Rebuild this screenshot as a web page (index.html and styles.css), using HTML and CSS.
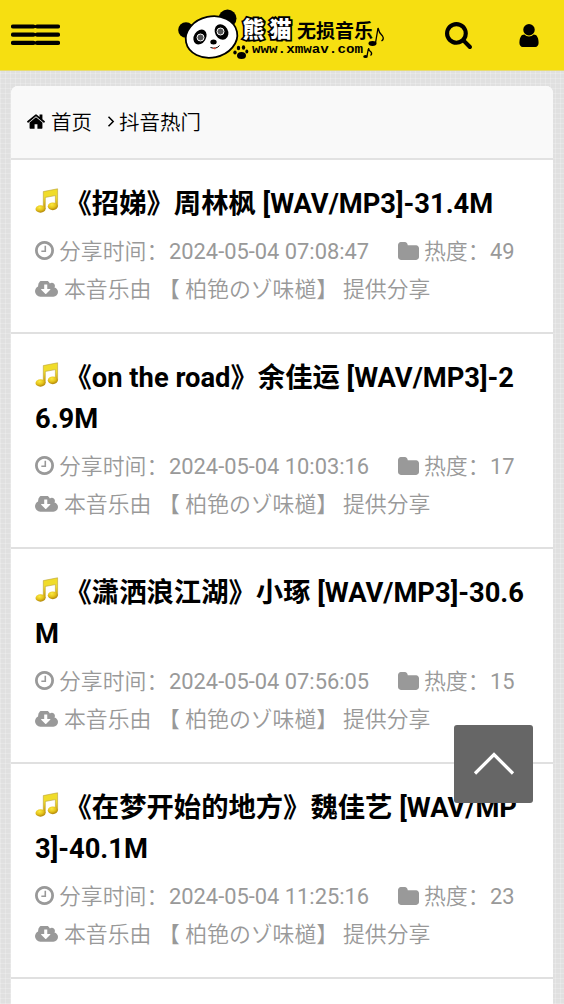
FILE: index.html
```html
<!DOCTYPE html>
<html lang="zh-CN">
<head>
<meta charset="utf-8">
<title>抖音热门</title>
<link rel="stylesheet" href="styles.css">
</head>
<body>
<svg class="defs" aria-hidden="true">
  <defs>
    <linearGradient id="gold" x1="0" y1="0" x2="0" y2="1"><stop offset="0" stop-color="#f0dc28"/><stop offset=".45" stop-color="#f0dc2c"/><stop offset="1" stop-color="#c99500"/></linearGradient>
    <radialGradient id="ball" cx=".4" cy=".3" r=".75"><stop offset="0" stop-color="#fbea40"/><stop offset=".5" stop-color="#e6c41c"/><stop offset="1" stop-color="#a87b05"/></radialGradient>
  </defs>
  <symbol id="i-note" viewBox="0 0 24 26">
    <path d="M8.300 3.600 22.600.8V18h-2.200V7.600L10.300 9.400V21H8.300Z" fill="url(#gold)" stroke="#b9a13a" stroke-width=".6"/>
    <ellipse cx="5.500" cy="21" rx="5" ry="3.700" fill="url(#ball)"/>
    <ellipse cx="17.800" cy="18.300" rx="5" ry="3.900" fill="url(#ball)"/>
  </symbol>
  <symbol id="i-search" viewBox="64 128 1664 1664"><path d="M1216 832q0-185-131.5-316.5t-316.5-131.5-316.5 131.5-131.5 316.5 131.5 316.5 316.5 131.5 316.5-131.5 131.5-316.5zm512 832q0 52-38 90t-90 38q-54 0-90-38l-343-342q-179 124-399 124-143 0-273.5-55.5t-225-150-150-225-55.5-273.5 55.5-273.5 150-225 225-150 273.5-55.5 273.5 55.5 225 150 150 225 55.5 273.5q0 220-124 399l343 343q37 37 37 90z"/></symbol>
  <symbol id="i-user" viewBox="256 128 1280 1536"><path d="M1536 1399q0 109-62.5 187t-150.5 78h-854q-88 0-150.5-78t-62.5-187q0-85 8.500-160.5t31.5-152 58.5-131 94-89 134.5-34.5q131 128 313 128t313-128q76 0 134.5 34.5t94 89 58.5 131 31.5 152 8.500 160.500zm-256-887q0 159-112.5 271.5t-271.5 112.5-271.5-112.5-112.5-271.5 112.5-271.5 271.5-112.5 271.5 112.5 112.5 271.500z"/></symbol>
  <symbol id="i-home" viewBox="88 253 1616 1283"><path d="M1472 992v480q0 26-19 45t-45 19h-384v-384h-256v384h-384q-26 0-45-19t-19-45v-480q0-1 .5-3t.5-3l575-474 575 474q1 2 1 6zm223-69l-62 74q-8 9-21 11h-3q-13 0-21-7l-692-577-692 577q-12 8-24 7-13-2-21-11l-62-74q-8-10-7-23.5t11-21.5l719-599q32-26 76-26t76 26l244 204v-195q0-14 9-23t23-9h192q14 0 23 9t9 23v408l219 182q10 8 11 21.5t-7 23.500z"/></symbol>
  <symbol id="i-clock" viewBox="128 128 1536 1536"><path d="M1024 544v448q0 14-9 23t-23 9h-320q-14 0-23-9t-9-23v-64q0-14 9-23t23-9h224v-352q0-14 9-23t23-9h64q14 0 23 9t9 23zm416 352q0-148-73-273t-198-198-273-73-273 73-198 198-73 273 73 273 198 198 273 73 273-73 198-198 73-273zm224 0q0 209-103 385.5t-279.5 279.5-385.5 103-385.5-103-279.5-279.5-103-385.5 103-385.5 279.5-279.5 385.5-103 385.5 103 279.5 279.5 103 385.500z"/></symbol>
  <symbol id="i-folder" viewBox="64 128 1664 1408"><path d="M1728 608v704q0 92-66 158t-158 66h-1216q-92 0-158-66t-66-158v-960q0-92 66-158t158-66h320q92 0 158 66t66 158v32h672q92 0 158 66t66 158z"/></symbol>
  <symbol id="i-cloud" viewBox="0 256 1920 1280"><path d="M1280 928q0-14-9-23t-23-9h-224v-352q0-13-9.500-22.500t-22.500-9.500h-192q-13 0-22.500 9.500t-9.500 22.500v352h-224q-13 0-22.500 9.500t-9.500 22.500q0 14 9 23l352 352q9 9 23 9t23-9l351-351q10-12 10-24zm640 224q0 159-112.5 271.5t-271.5 112.500h-1088q-185 0-316.5-131.5t-131.5-316.500q0-130 70-240t188-165q-2-30-2-43 0-212 150-362t362-150q156 0 285.5 87t188.5 231q71-62 166-62 106 0 181 75t75 181q0 76-41 138 130 31 213.5 135.5t83.5 238.500z"/></symbol>
</svg>

<header class="topbar">
  <svg class="menu" viewBox="0 0 49 22"><path d="M2 2.500H22.500M26 2.500H47M2 10.700H22.500M26 10.700H47M2 18.900H22.500M26 18.900H47" stroke="#000" stroke-width="4.200" stroke-linecap="round"/></svg>
  <svg class="logo" viewBox="170 0 225 70">
    <circle cx="186" cy="30" r="7.800"/>
    <circle cx="227.500" cy="18.500" r="9"/>
    <ellipse cx="211.500" cy="37" rx="26" ry="20.500" transform="rotate(-12 211.500 37)" fill="#fff" stroke="#000" stroke-width="1.800"/>
    <ellipse cx="200" cy="37" rx="6" ry="8" transform="rotate(32 200 37)"/>
    <ellipse cx="221.500" cy="32" rx="6.500" ry="8" transform="rotate(-30 221.500 32)"/>
    <circle cx="200.500" cy="37.500" r="3.500" fill="#555" stroke="#fff"/><circle cx="220.500" cy="31.500" r="3.500" fill="#555" stroke="#fff"/>
    <ellipse cx="213.500" cy="42" rx="3.200" ry="2.500"/>
    <path d="M210.500 47.500q6 2 9-2" fill="none" stroke="#000"/>
    <path d="m212 48 4-.5-1 2Z" fill="#e94732"/>
    <g><ellipse cx="241.500" cy="55.500" rx="4.500" ry="3.500"/><ellipse cx="235" cy="52.500" rx="1.700" ry="2"/><ellipse cx="238.500" cy="48" rx="1.700" ry="2.300"/><ellipse cx="243.500" cy="47.500" rx="1.700" ry="2.300"/><ellipse cx="246.800" cy="51.500" rx="1.500" ry="1.900"/></g>
    <text class="logo-name" x="242.500" y="37" textLength="49">熊猫</text>
    <text class="logo-sub" x="297" y="37.500" textLength="76" lengthAdjust="spacingAndGlyphs">无损音乐</text>
    <text class="logo-url" x="252" y="53" textLength="111" lengthAdjust="spacingAndGlyphs">www.xmwav.com</text>
    <g fill="none" stroke="#000" stroke-width="1.300"><path d="M375.500 43 378 28q1 5 4.500 8 2 3-1 5"/><path d="m367 56 1.500-8q.5 3 2.500 4 1.500 2-.5 3.500"/></g>
    <ellipse cx="372.500" cy="43.500" rx="4" ry="2.400"/><ellipse cx="365.500" cy="56.500" rx="2.300" ry="1.600"/>
  </svg>
  <svg class="search"><use href="#i-search"/></svg>
  <svg class="user"><use href="#i-user"/></svg>
</header>

<main class="panel">
  <nav class="crumbs">
    <svg class="home"><use href="#i-home"/></svg><span>首页</span>
    <svg class="chev" viewBox="0 0 8 13"><path d="m1.500 1.800 4.700 4.700-4.700 4.700" fill="none" stroke="#000" stroke-width="1.500"/></svg><span>抖音热门</span>
  </nav>
  <article class="item">
    <h2><svg class="note"><use href="#i-note"/></svg>《招娣》周林枫 [WAV/MP3]-31.4M</h2>
    <p class="meta"><svg class="clock"><use href="#i-clock"/></svg><span class="label">分享时间：</span><span class="date">2024-05-04 07:08:47</span><svg class="folder"><use href="#i-folder"/></svg><span class="heat">热度：</span><span class="count">49</span></p>
    <p class="meta"><svg class="cloud"><use href="#i-cloud"/></svg><span class="by">本音乐由</span><span class="who">【 柏铯のゾ味檤】</span><span>提供分享</span></p>
  </article>
  <article class="item">
    <h2><svg class="note"><use href="#i-note"/></svg>《on the road》余佳运 [WAV/MP3]-2<br>6.9M</h2>
    <p class="meta"><svg class="clock"><use href="#i-clock"/></svg><span class="label">分享时间：</span><span class="date">2024-05-04 10:03:16</span><svg class="folder"><use href="#i-folder"/></svg><span class="heat">热度：</span><span class="count">17</span></p>
    <p class="meta"><svg class="cloud"><use href="#i-cloud"/></svg><span class="by">本音乐由</span><span class="who">【 柏铯のゾ味檤】</span><span>提供分享</span></p>
  </article>
  <article class="item">
    <h2><svg class="note"><use href="#i-note"/></svg>《潇洒浪江湖》小琢 [WAV/MP3]-30.6<br>M</h2>
    <p class="meta"><svg class="clock"><use href="#i-clock"/></svg><span class="label">分享时间：</span><span class="date">2024-05-04 07:56:05</span><svg class="folder"><use href="#i-folder"/></svg><span class="heat">热度：</span><span class="count">15</span></p>
    <p class="meta"><svg class="cloud"><use href="#i-cloud"/></svg><span class="by">本音乐由</span><span class="who">【 柏铯のゾ味檤】</span><span>提供分享</span></p>
  </article>
  <article class="item">
    <h2><svg class="note"><use href="#i-note"/></svg>《在梦开始的地方》魏佳艺 [WAV/MP<br>3]-40.1M</h2>
    <p class="meta"><svg class="clock"><use href="#i-clock"/></svg><span class="label">分享时间：</span><span class="date">2024-05-04 11:25:16</span><svg class="folder"><use href="#i-folder"/></svg><span class="heat">热度：</span><span class="count">23</span></p>
    <p class="meta"><svg class="cloud"><use href="#i-cloud"/></svg><span class="by">本音乐由</span><span class="who">【 柏铯のゾ味檤】</span><span>提供分享</span></p>
  </article>
</main>
<a class="to-top" href="#"><svg viewBox="0 0 42 24"><path d="M2 21.500 21 2.500l19 19" fill="none" stroke="#fff" stroke-width="3.200"/></svg></a>
</body>
</html>
```
FILE: styles.css
```css
* { box-sizing: border-box; }
html, body { height: 1004px; overflow: hidden; }
body {
  margin: 0;
  font-family: Roboto, "Noto Sans CJK SC", sans-serif;
  color: #000;
  background-color: #e0e0e0;
  background-image:
    repeating-linear-gradient(90deg, rgba(255,255,255,.2) 0 1px, transparent 1px 5px),
    repeating-linear-gradient(0deg, rgba(255,255,255,.2) 0 1px, transparent 1px 5px);
}
svg { display: block; flex: none; fill: currentColor; }
.defs { position: absolute; width: 0; height: 0; }
.topbar {
  display: flex;
  align-items: center;
  height: 71px;
  padding-left: 11px;
  background: #f6df11;
  border-bottom: 1px solid #e8dc70;
}
.menu { width: 49px; height: 22px; }
.logo { width: 225px; height: 70px; margin-left: 110px; }
.search { width: 27px; height: 27px; margin-left: 50px; }
.user { width: 20px; height: 23px; margin-left: 47px; }
.logo-name { font: 900 22px "Noto Sans CJK SC", sans-serif; fill: #fff; stroke: #000; stroke-width: 3.500px; paint-order: stroke; }
.logo-sub { font: 700 19px/1 "Noto Sans CJK SC", sans-serif; }
.logo-url { font: bold 13.500px/1 "Liberation Mono", monospace; }
.panel {
  margin: 15px 11px 0;
  background: #fff;
  border-radius: 7px 7px 0 0;
  overflow: hidden;
  height: 940px;
}
.crumbs {
  display: flex;
  align-items: center;
  height: 74px;
  padding: 0 16px 2px;
  background: #f9f9f9;
  border-bottom: 2px solid #e2e2e2;
  font-size: 20.500px;
  font-weight: 350;
}
.home { width: 18px; height: 15px; margin-right: 6px; }
.chev { width: 8px; height: 13px; margin: 0 4px 0 15px; }
.item { height: 215px; padding: 24px 0 0 24px; border-bottom: 2px solid #e0e0e0; }
.item:nth-of-type(1) { height: 174px; }
h2 { margin: 0 0 7px; font-size: 27.340px; line-height: 41px; font-weight: 700; white-space: nowrap; }
.note { display: inline-block; width: 24px; height: 26px; margin-right: 5.500px; vertical-align: -1px; }
.meta { display: flex; align-items: center; height: 37.500px; margin: 0; font-size: 21.870px; font-weight: 350; color: #999; white-space: nowrap; }
.label, .heat, .by, .who, .who + span { padding-bottom: 2px; }
.clock { width: 19px; height: 19px; margin-right: 5px; }
.label { width: 110px; }
.date { width: 229px; }
.date, .count { font-weight: 400; padding-top: 2px; }
.folder { width: 21px; height: 18px; margin-right: 5px; }
.heat { width: 66px; }
.cloud { width: 23px; height: 16px; margin: 1px 6px 0 0; }
.by { width: 94px; }
.who { width: 185px; }
.to-top {
  position: fixed;
  left: 454px;
  top: 725px;
  width: 79px;
  height: 78px;
  display: flex;
  align-items: center;
  justify-content: center;
  background: #666;
  border-radius: 3px;
}
.to-top svg { width: 42px; height: 24px; }
```
